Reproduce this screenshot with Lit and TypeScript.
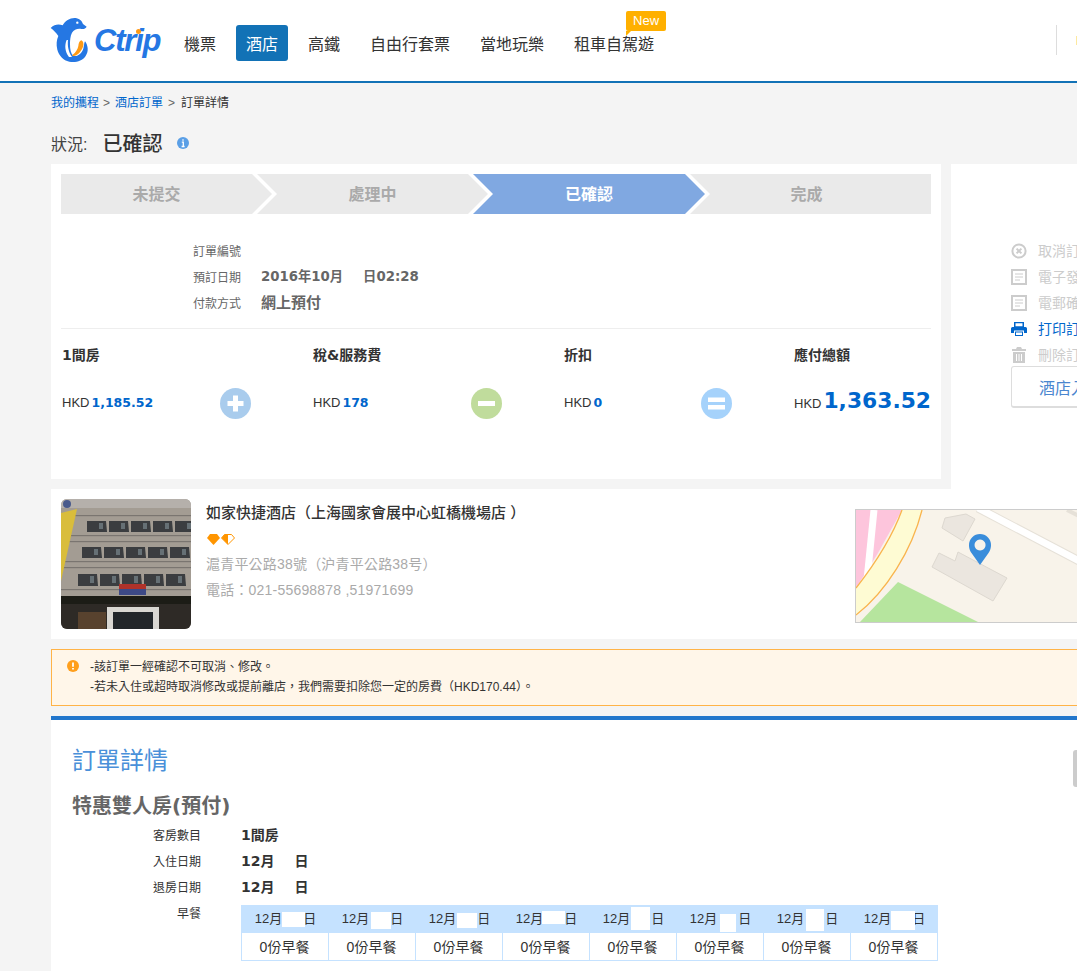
import { LitElement, html, css, svg } from "lit";
import { customElement } from "lit/decorators.js";

const NAV = ["機票", "酒店", "高鐵", "自由行套票", "當地玩樂", "租車自駕遊"];
const STEPS = ["未提交", "處理中", "已確認", "完成"];

const SUMMARY = [
  { title: "1間房", amount: "1,185.52", op: "plus" },
  { title: "稅&服務費", amount: "178", op: "minus" },
  { title: "折扣", amount: "0", op: "equal" },
];

const ACTIONS = [
  { label: "取消訂單", icon: "cancel" },
  { label: "電子發票", icon: "doc" },
  { label: "電郵確認", icon: "doc" },
  { label: "打印訂單", icon: "print", on: true },
  { label: "刪除訂單", icon: "trash" },
];

// white patches that hide the day number, relative to each header cell
const DAYS = [
  { x: 41, y: 7, w: 23, h: 15 },
  { x: 43, y: 7, w: 20, h: 17 },
  { x: 42, y: 8, w: 20, h: 15 },
  { x: 40, y: 6, w: 23, h: 13 },
  { x: 42, y: 2, w: 19, h: 23 },
  { x: 44, y: 9, w: 16, h: 18 },
  { x: 43, y: 4, w: 18, h: 22 },
  { x: 41, y: 6, w: 24, h: 19 },
];

const actionIcon = (name: string) => {
  if (name === "cancel")
    return svg`<circle cx="8" cy="8" r="6.6" fill="none" stroke="#ccc" stroke-width="2"/>
      <path d="M5.6 5.6l4.8 4.8M10.4 5.6l-4.8 4.8" stroke="#ccc" stroke-width="2"/>`;
  if (name === "doc")
    return svg`<rect x="1" y="1" width="14" height="14" fill="none" stroke="#ccc" stroke-width="2"/>
      <path d="M4 5h8M4 8h8M4 11h5" stroke="#ccc" stroke-width="1"/>`;
  if (name === "print")
    return svg`<path fill="#0066cc" d="M3 1h10v5H3zM1.500 6h13A1.500 1.500 0 0 1 16 7.500V12h-3V9.500H3V12H0V7.500A1.500 1.500 0 0 1 1.500 6zM4 10.500h8V15H4z"/>
      <path fill="#fff" d="M4.500 2.300h7v3h-7zM5 11.500h6V14H5z"/>`;
  return svg`<path fill="#ccc" d="M6 0h4l1 2h4v2H1V2h4zM2 5h12v11H2z"/>
    <path stroke="#fff" stroke-width="1" d="M5.500 7v7M8 7v7M10.500 7v7"/>`;
};

const opIcon = (name: string) => {
  if (name === "plus") return svg`<path d="M15.500 7.500v16M7.500 15.500h16" stroke="#fff" stroke-width="5"/>`;
  if (name === "minus") return svg`<rect x="7" y="13" width="17" height="5" fill="#fff"/>`;
  return svg`<rect x="7" y="9.500" width="17" height="4.500" fill="#fff"/><rect x="7" y="17" width="17" height="4.500" fill="#fff"/>`;
};

@customElement("app-root")
export class AppRoot extends LitElement {
  static styles = css`
    :host {
      display: block;
      position: relative;
      width: 1077px;
      height: 971px;
      overflow: hidden;
      background: #f4f4f4;
      color: #333;
      font-family: "Liberation Sans", "Noto Sans CJK TC", sans-serif;
      font-size: 12px;
    }
    a {
      color: #0066cc;
      text-decoration: none;
    }
    svg {
      display: block;
      flex: none;
    }

    .header {
      display: flex;
      align-items: flex-start;
      box-sizing: border-box;
      height: 83px;
      background: #fff;
      border-bottom: 2px solid #1272b6;
      padding: 12px 0 0 48px;
    }
    .logo {
      position: relative;
      display: flex;
      width: 126px;
    }
    .logo-text {
      margin: 5px 0 0 0;
      font-size: 31px;
      line-height: 48px;
      font-weight: 700;
      font-style: italic;
      letter-spacing: -1.2px;
      color: #2577e3;
    }
    .logo-dot {
      position: absolute;
      left: 88px;
      top: 17px;
      width: 5px;
      height: 5px;
      border-radius: 50%;
      background: #ff9a14;
    }
    .nav {
      display: flex;
      gap: 10px;
      margin-top: 13px;
    }
    .nav-item {
      position: relative;
      height: 36px;
      line-height: 39px;
      padding: 0 10px;
      font-size: 16px;
      color: #333;
      border-radius: 3px;
    }
    .nav-item.on {
      background: #1272b6;
      color: #fff;
    }
    .new {
      position: absolute;
      left: 62px;
      top: -14px;
      width: 40px;
      height: 20px;
      line-height: 20px;
      text-align: center;
      font-size: 13px;
      color: #fff;
      background: #ffb000;
      border-radius: 2px;
    }
    .new::after {
      content: "";
      position: absolute;
      left: 0;
      top: 20px;
      border-top: 5px solid #ffb000;
      border-right: 5px solid transparent;
    }
    .header-end {
      display: flex;
      align-items: center;
      margin: 13px 0 0 auto;
      height: 30px;
    }
    .divider {
      width: 1px;
      height: 30px;
      background: #ddd;
    }
    .coin {
      width: 1px;
      height: 9px;
      margin-left: 19px;
      background: #fde9a0;
    }

    .wrap {
      padding-left: 51px;
    }
    .crumbs {
      height: 40px;
      line-height: 41px;
      color: #333;
    }
    .crumbs i {
      font-style: normal;
      color: #666;
      margin: 0 5px 0 4px;
    }
    .crumbs i:nth-of-type(2) {
      margin: 0 6px 0 5px;
    }
    .status {
      display: flex;
      align-items: center;
      box-sizing: border-box;
      height: 41px;
      padding-bottom: 2px;
      font-size: 16px;
      color: #444;
    }
    .status b {
      margin: 0 15px;
      font-size: 20px;
      color: #333;
      font-weight: 500;
    }

    .top {
      display: flex;
      gap: 10px;
      height: 325px;
    }
    .main {
      box-sizing: border-box;
      width: 890px;
      height: 315px;
      padding: 10px;
      background: #fff;
    }
    .steps {
      display: flex;
    }
    .step {
      height: 40px;
      line-height: 42px;
      margin-left: -15px;
      text-align: center;
      font-size: 16px;
      font-weight: 700;
      color: #aaa;
      background: #eaeaea;
      clip-path: polygon(
        0 0,
        calc(100% - 20px) 0,
        100% 50%,
        calc(100% - 20px) 100%,
        0 100%,
        20px 50%
      );
    }
    .step:nth-child(1) {
      width: 211px;
      margin-left: 0;
      padding-right: 20px;
      box-sizing: border-box;
      clip-path: polygon(0 0, calc(100% - 20px) 0, 100% 50%, calc(100% - 20px) 100%, 0 100%);
    }
    .step:nth-child(2) {
      width: 231px;
    }
    .step:nth-child(3) {
      width: 232px;
      background: #80a8e1;
      color: #fff;
    }
    .step:nth-child(4) {
      width: 241px;
      padding-right: 8px;
      box-sizing: border-box;
      clip-path: polygon(0 0, 100% 0, 100% 100%, 0 100%, 20px 50%);
    }
    .info {
      padding: 24px 0 12px 132px;
      border-bottom: 1px solid #eee;
    }
    .info-row {
      display: flex;
      height: 26px;
      line-height: 26px;
      color: #666;
    }
    .info-row > span {
      width: 68px;
      margin-top: 1px;
    }
    .info-row b {
      font-size: 13.300px;
      color: #666;
      font-family: "DejaVu Sans", "Noto Sans CJK TC", sans-serif;
    }
    .info-row b.pay {
      font-size: 15px;
    }
    .gap {
      display: inline-block;
      width: 20px;
    }
    .summary {
      display: flex;
      padding: 17px 0 0 1px;
    }
    .cell {
      box-sizing: border-box;
      width: 251px;
      padding-right: 62px;
    }
    .cell:nth-child(3) {
      width: 230px;
    }
    .cell:last-child {
      width: auto;
      padding-right: 0;
    }
    .cell-title {
      line-height: 18px;
      font-size: 14px;
      font-weight: 700;
      color: #333;
      font-family: "DejaVu Sans", "Noto Sans CJK TC", sans-serif;
    }
    .cell-row {
      display: flex;
      align-items: center;
      justify-content: space-between;
      height: 31px;
      margin-top: 24px;
      font-size: 13px;
    }
    .cell-row > div {
      padding-bottom: 3px;
    }
    .cell:last-child .cell-row > div {
      padding-bottom: 6px;
    }
    .amount {
      font-family: "DejaVu Sans", sans-serif;
      font-size: 12.500px;
      font-weight: 700;
      color: #0066cc;
      margin-left: 2px;
    }
    .total {
      font-family: "DejaVu Sans", sans-serif;
      font-size: 21.800px;
      font-weight: 700;
      color: #0066cc;
      margin-left: 2px;
    }

    .side {
      flex: 1;
      min-width: 0;
      padding: 74px 0 0 60px;
      background: #fff;
      white-space: nowrap;
      overflow: hidden;
    }
    .action {
      display: flex;
      align-items: center;
      gap: 11px;
      height: 26px;
      font-size: 14px;
      line-height: 24px;
      color: #ccc;
    }
    .action.on {
      color: #0066cc;
    }
    .voucher {
      box-sizing: border-box;
      width: 200px;
      height: 42px;
      line-height: 44px;
      margin-top: -2px;
      padding-left: 27px;
      font-size: 16px;
      color: #4a86cf;
      border: 1px solid #ddd;
      border-bottom-width: 2px;
      border-radius: 3px;
    }

    .hotel {
      display: flex;
      height: 150px;
      box-sizing: border-box;
      padding: 10px;
      background: #fff;
    }
    .photo {
      border-radius: 6px;
    }
    .hotel-info {
      flex: 1;
      margin-left: 15px;
    }
    .hotel-name {
      line-height: 28px;
      font-size: 15px;
      font-weight: 500;
      color: #333;
    }
    .gems {
      display: flex;
      gap: 1px;
      margin: 7px 0 5px 1px;
      height: 12px;
    }
    .hotel-line {
      line-height: 26px;
      font-size: 14px;
      color: #aaa;
    }
    .addr {
      letter-spacing: 0.2px;
    }
    .phone {
      letter-spacing: 0.2px;
    }
    .map {
      box-sizing: border-box;
      width: 240px;
      height: 114px;
      margin: 10px -28px 0 0;
      border: 1px solid #ccc;
    }

    .notice {
      display: flex;
      box-sizing: border-box;
      height: 57px;
      margin-top: 10px;
      padding: 7px 0 0 15px;
      background: #fff6e9;
      border: 1px solid #ffb347;
      border-right: none;
      line-height: 20px;
      color: #333;
    }
    .notice svg {
      margin: 3px 11px 0 0;
    }

    .detail {
      height: 400px;
      margin-top: 10px;
      padding: 26px 0 0 21px;
      background: #fff;
      border-top: 4px solid #2176cc;
    }
    .detail h2 {
      margin: 0;
      line-height: 30px;
      font-size: 24px;
      font-weight: 400;
      color: #4a90d9;
    }
    .detail h3 {
      margin: 15px 0 1px;
      line-height: 30px;
      font-size: 20px;
      font-weight: 700;
      color: #666;
      font-family: "DejaVu Sans", "Noto Sans CJK TC", sans-serif;
    }
    .field {
      display: flex;
      height: 26px;
      line-height: 26px;
    }
    .field > span {
      width: 129px;
      margin-right: 40px;
      text-align: right;
      color: #333;
      line-height: 28px;
    }
    .field b {
      font-size: 14px;
      color: #333;
      font-family: "DejaVu Sans", "Noto Sans CJK TC", sans-serif;
    }
    .meal {
      display: flex;
      margin-top: 5px;
    }
    .meal > span {
      width: 129px;
      margin-right: 40px;
      text-align: right;
      line-height: 18px;
    }
    .table {
      display: grid;
      grid-template-columns: repeat(8, 87px);
      width: 697px;
      border-bottom: 1px solid #c5e2ff;
      border-left: 1px solid #c5e2ff;
      box-sizing: border-box;
    }
    .th {
      position: relative;
      display: flex;
      justify-content: center;
      gap: 21px;
      margin-left: -1px;
      padding-left: 1px;
      height: 28px;
      line-height: 28px;
      font-size: 13px;
      background: #c5e2ff;
    }
    .patch {
      position: absolute;
      background: #fff;
    }
    .td {
      height: 27px;
      line-height: 28px;
      margin-left: -1px;
      text-align: center;
      font-size: 14px;
      border-right: 1px solid #c5e2ff;
    }

    .scroll-tab {
      position: absolute;
      left: 1073px;
      top: 750px;
      width: 8px;
      height: 37px;
      background: #ccc;
      border-radius: 3px;
    }
  `;

  renderLogo() {
    return html`<svg width="46" height="52" viewBox="0 0 138 156">
      <path
        fill="#2577e3"
        d="M8 48C20 36 33 36 44 40C52 26 66 17 82 18C94 19 102 27 105 36L116 44C113 50 107 52 100 51C88 49 78 53 72 62C67 72 66 84 66 96C66 112 68 124 76 132C88 134 100 126 106 110C108 102 108 94 111 88C120 100 123 118 113 132C103 147 82 153 64 149C46 145 33 131 28 113C24 97 26 84 31 72C24 62 16 54 8 48Z"
      />
      <circle cx="88" cy="32" r="3.500" fill="#fff" />
      <path fill="#fff" d="M56 84C49 100 51 120 63 135L72 135C61 120 58 100 60 84Z" />
      <path
        fill="#ff9a14"
        d="M100 85C106 88 108 96 105 104C101 116 90 130 76 132C73 132 72 130 74 128C83 122 89 112 91 102C92 94 94 87 100 85Z"
      />
    </svg>`;
  }

  renderPhoto() {
    const rows = [
      { x: 26, y: 22, h: 11 },
      { x: 21, y: 48, h: 11 },
      { x: 17, y: 75, h: 12 },
    ];
    return html`<svg class="photo" width="130" height="130" viewBox="0 0 130 130">
      <defs><filter id="soft"><feGaussianBlur stdDeviation="0.7" /></filter></defs>
      <rect width="130" height="130" fill="#a39c93" />
      <g filter="url(#soft)">
        <rect width="130" height="9" fill="#b5b0ab" />
        ${[16, 36, 42, 62, 68, 90].map((y) => svg`<rect y=${y} width="130" height="1.200" fill="#7a756f" />`)}
        ${rows.map((r) =>
          [0, 1, 2, 3, 4].map(
            (i) => svg`<path d="M${r.x + i * 22} ${r.y}h19l1 ${r.h}h-20z" fill="#3a3d3f" />
              <rect x=${r.x + i * 22 + 12} y=${r.y + 2} width="4" height=${r.h - 5} fill="#667074" />`
          )
        )}
        <path d="M0 14L16 10L0 82Z" fill="#d9bd3a" />
        <circle cx="6" cy="5" r="4" fill="#4a5a8c" />
        <rect x="58" y="85" width="27" height="5" fill="#b0312c" />
        <rect x="58" y="90" width="27" height="6" fill="#3c4a86" />
        <rect y="97" width="130" height="8" fill="#1c1a18" />
        <rect y="105" width="130" height="25" fill="#2e2a26" />
        <rect x="17" y="113" width="28" height="17" fill="#59432f" />
        <rect x="46" y="108" width="52" height="22" fill="#d9d7d2" />
        <rect x="52" y="113" width="40" height="17" fill="#24262a" />
      </g>
    </svg>`;
  }

  renderGems() {
    const gem = "M3 0H10L13 4L6.500 11L0 4Z";
    return html`<div class="gems">
      <svg width="13" height="11" viewBox="0 0 13 11"><path d=${gem} fill="#ff9500" /></svg>
      <svg width="14" height="11" viewBox="0 0 14 11">
        <path d="M3.500 .500H10.500L13.500 4L7 10.500L.500 4Z" fill="#fff" stroke="#ff9500" />
        <path d="M3.500 .500H7V10.500L.500 4Z" fill="#ff9500" />
      </svg>
    </div>`;
  }

  renderMap() {
    return html`<svg class="map" viewBox="0 0 238 112" width="240" height="114">
      <rect width="238" height="112" fill="#f8f3ea" />
      <path d="M0 0H46L22 43L0 78Z" fill="#fdc5dc" />
      <path d="M18 0L11 70" stroke="#fff" stroke-width="7" />
      <path d="M46 0C38 22 22 50 0 78V105C30 82 56 40 66 0Z" fill="#fefbd3" />
      <path d="M46 0C38 22 22 50 0 78M0 105C30 82 56 40 66 0" fill="none" stroke="#f9b44d" stroke-width="1.300" />
      <path d="M42 72L122 112H4Z" fill="#b6e59e" />
      <path d="M89 8L110 4L119 9L107 31L86 18Z" fill="#ebe6df" stroke="#ddd8d0" />
      <path d="M83 43L99 51L102 42L151 68L137 91L76 57Z" fill="#ebe6df" stroke="#ddd8d0" />
      <path d="M122 -2L225 52" stroke="#e6e1d8" stroke-width="9" />
      <path d="M122 -2L225 52" stroke="#fff" stroke-width="7" />
      <path d="M211 0L225 7" stroke="#e6e1d8" stroke-width="4" />
      <path
        fill-rule="evenodd"
        fill="#3a8ddb"
        d="M124 55L115.500 43C113 39.500 113 36 113 35A11 11 0 0 1 135 35C135 36 135 39.500 132.500 43ZM124 29.500A5.500 5.500 0 1 0 124.100 29.500Z"
      />
    </svg>`;
  }

  render() {
    return html`
      <div class="header">
        <div class="logo">
          ${this.renderLogo()}
          <span class="logo-text">Ctrip</span>
          <i class="logo-dot"></i>
        </div>
        <div class="nav">
          ${NAV.map(
            (n) => html`<div class="nav-item ${n === "酒店" ? "on" : ""}">
              ${n}${n === "租車自駕遊" ? html`<div class="new">New</div>` : ""}
            </div>`
          )}
        </div>
        <div class="header-end"><div class="divider"></div><div class="coin"></div></div>
      </div>

      <div class="wrap">
        <div class="crumbs">
          <a href="#">我的攜程</a><i>&gt;</i><a href="#">酒店訂單</a><i>&gt;</i>訂單詳情
        </div>
        <div class="status">
          狀況:
          <b>已確認</b>
          <svg width="12" height="12" viewBox="0 0 12 12">
            <circle cx="6" cy="6" r="6" fill="#5a9fe6" />
            <path d="M6 2.200v1.600M4.800 5.200H6.300V9.500M4.600 9.500H7.600" stroke="#fff" stroke-width="1.300" fill="none" />
          </svg>
        </div>

        <div class="top">
          <div class="main">
            <div class="steps">${STEPS.map((s) => html`<div class="step">${s}</div>`)}</div>
            <div class="info">
              <div class="info-row"><span>訂單編號</span></div>
              <div class="info-row"><span>預訂日期</span><b>2016年10月<i class="gap"></i>日02:28</b></div>
              <div class="info-row"><span>付款方式</span><b class="pay">網上預付</b></div>
            </div>
            <div class="summary">
              ${SUMMARY.map(
                (c) => html`<div class="cell">
                  <div class="cell-title">${c.title}</div>
                  <div class="cell-row">
                    <div>HKD<span class="amount">${c.amount}</span></div>
                    <svg width="31" height="31" viewBox="0 0 31 31">
                      <circle
                        cx="15.500"
                        cy="15.500"
                        r="15.500"
                        fill=${c.op === "plus" ? "#a9cced" : c.op === "minus" ? "#c0dc9c" : "#a5d2fb"}
                      />
                      ${opIcon(c.op)}
                    </svg>
                  </div>
                </div>`
              )}
              <div class="cell">
                <div class="cell-title">應付總額</div>
                <div class="cell-row">
                  <div>HKD<span class="total">1,363.52</span></div>
                </div>
              </div>
            </div>
          </div>

          <div class="side">
            ${ACTIONS.map(
              (a) => html`<div class="action ${a.on ? "on" : ""}">
                <svg width="16" height="16" viewBox="0 0 16 16">${actionIcon(a.icon)}</svg>${a.label}
              </div>`
            )}
            <div class="voucher">酒店入住憑證</div>
          </div>
        </div>

        <div class="hotel">
          ${this.renderPhoto()}
          <div class="hotel-info">
            <div class="hotel-name">如家快捷酒店（上海國家會展中心虹橋機場店 ）</div>
            ${this.renderGems()}
            <div class="hotel-line addr">滬青平公路38號（沪青平公路38号）</div>
            <div class="hotel-line phone">電話：021-55698878 ,51971699</div>
          </div>
          ${this.renderMap()}
        </div>

        <div class="notice">
          <svg width="12" height="12" viewBox="0 0 12 12">
            <circle cx="6" cy="6" r="6" fill="#ff9f1c" />
            <path d="M6 2.500v4.200M6 8v1.600" stroke="#fff" stroke-width="1.800" />
          </svg>
          <div>
            <div>-該訂單一經確認不可取消、修改。</div>
            <div>-若未入住或超時取消修改或提前離店，我們需要扣除您一定的房費（HKD170.44）。</div>
          </div>
        </div>

        <div class="detail">
          <h2>訂單詳情</h2>
          <h3>特惠雙人房(預付)</h3>
          <div class="field"><span>客房數目</span><b>1間房</b></div>
          <div class="field"><span>入住日期</span><b>12月<i class="gap"></i>日</b></div>
          <div class="field"><span>退房日期</span><b>12月<i class="gap"></i>日</b></div>
          <div class="meal">
            <span>早餐</span>
            <div class="table">
              ${DAYS.map(
                (d) => html`<div class="th">
                  <span>12月</span><span>日</span>
                  <div
                    class="patch"
                    style="left:${d.x}px;top:${d.y}px;width:${d.w}px;height:${d.h}px"
                  ></div>
                </div>`
              )}
              ${DAYS.map(() => html`<div class="td">0份早餐</div>`)}
            </div>
          </div>
        </div>
      </div>
      <div class="scroll-tab"></div>
    `;
  }
}
